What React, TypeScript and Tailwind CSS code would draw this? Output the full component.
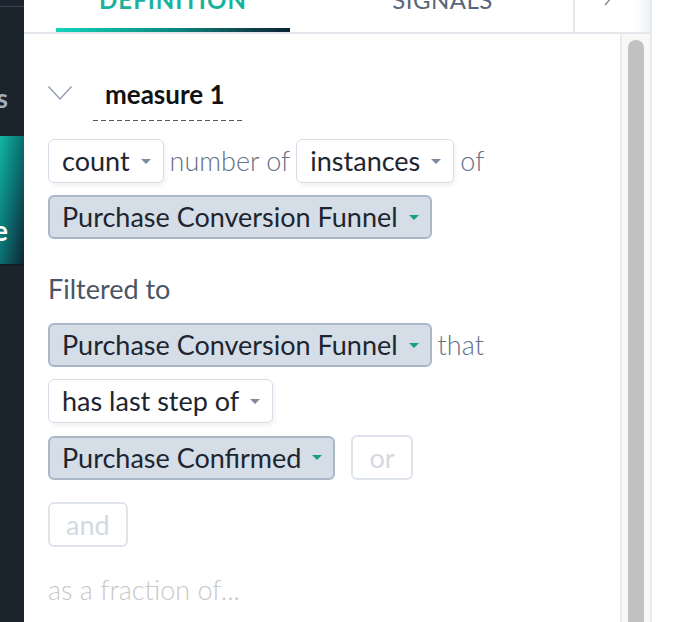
import React from 'react';

type Tone = 'plain' | 'entity';

function Caret({ tone }: { tone: Tone }) {
    return (
        <svg width="10" height="5" viewBox="0 0 10 5" className="ml-[11px] shrink-0">
            <path d="M0 0 L10 0 L5 5 Z" fill={tone === 'entity' ? '#179f86' : '#7d899c'} />
        </svg>
    );
}

function Picker({ label, tone = 'plain' }: { label: string; tone?: Tone }) {
    const look =
        tone === 'entity'
            ? 'border-2 border-[#a9b7c9] bg-[#d5dde7] pl-[12px] pr-[11px]'
            : 'border border-[#d7dde6] bg-white pl-[13px] pr-[12px] shadow-[2px_3px_4px_rgba(0,0,0,0.05)]';
    return (
        <div className={`flex h-[44px] shrink-0 items-center rounded-[6px] text-[#1d2530] ${look}`}>
            <span>{label}</span>
            <Caret tone={tone} />
        </div>
    );
}

function Ghost({ label, pad }: { label: string; pad: string }) {
    return (
        <div className={`flex h-[45px] shrink-0 items-center rounded-[6px] border-2 border-[#dfe4ec] text-[#d3d9e2] ${pad}`}>
            {label}
        </div>
    );
}

function Word({ children }: { children: React.ReactNode }) {
    return <span className="shrink-0 font-light text-[#657184]">{children}</span>;
}

function Sidebar() {
    return (
        <aside className="flex w-[24px] shrink-0 flex-col overflow-hidden bg-[#1b232d] font-bold">
            <div className="mt-[6px] h-px bg-[#3a434e]" />
            <div className="mt-[78px] flex h-[26px] justify-end overflow-hidden pr-[16px] text-[26px] leading-[26px] whitespace-nowrap text-[#a3adbb]">
                Metrics
            </div>
            <div className="mt-[25px] flex h-[128px] items-end justify-end overflow-hidden bg-gradient-to-br from-[#12b7a1] via-[#0b6f70] to-[#0a2636] pr-[16px] pb-[20px] text-[28px] leading-[28px] whitespace-nowrap text-white">
                Measure
            </div>
            <div className="h-[2px] bg-[#141a21]" />
        </aside>
    );
}

function Tabs() {
    return (
        <div className="flex h-[34px] shrink-0 border-b-2 border-[#e4e7eb]">
            <div className="ml-[32px] flex w-[234px] flex-col items-center">
                <div className="-mt-[12px] h-[40px] text-[24px] leading-[24px] font-bold tracking-[1px] text-[#19b39c]">
                    DEFINITION
                </div>
                <div className="mt-auto h-[4px] w-full bg-gradient-to-r from-[#14d4bb] via-[#0b8a80] to-[#0a2233]" />
            </div>
            <div className="flex w-[283px] justify-center pl-[22px]">
                <div className="-mt-[12px] text-[24px] leading-[24px] tracking-[0.5px] text-[#59657a]">SIGNALS</div>
            </div>
            <div className="w-[2px] bg-[#e4e7eb]" />
            <div className="flex flex-1 bg-gradient-to-r from-white from-80% to-[#eef0f3] pl-[28px]">
                <svg width="12" height="20" viewBox="0 0 12 20" className="-mt-[14px]">
                    <path d="M2 1 L10 10 L2 19" fill="none" stroke="#6f7b92" strokeWidth="1.2" />
                </svg>
            </div>
        </div>
    );
}

function Scrollbar() {
    return (
        <div className="flex w-[30px] shrink-0 border-l-2 border-[#e9eaec] bg-[#f8f8f8] pt-[6px] pl-[6px]">
            <div className="h-[600px] w-[16px] rounded-t-[8px] bg-[#c1c1c1]" />
        </div>
    );
}

export default function App() {
    return (
        <div className="flex h-[622px] w-[698px] overflow-hidden bg-white font-['Lato',sans-serif]">
            <Sidebar />
            <section className="flex w-[628px] shrink-0 flex-col border-r-2 border-[#e6e9ed]">
                <Tabs />
                <div className="flex flex-1 overflow-hidden">
                    <div className="flex flex-1 flex-col pl-[24px] text-[27px] leading-[34px]">
                        {/* measure name */}
                        <div className="mt-[37px] flex h-[50px] items-center">
                            <svg width="24" height="14" viewBox="0 0 24 14" className="-mt-[6px] shrink-0">
                                <path d="M0.5 0.5 L12 13 L23.5 0.5" fill="none" stroke="#8d99ab" strokeWidth="1.2" />
                            </svg>
                            <div className="ml-[21px] flex h-[50px] w-[150px] flex-col">
                                <div className="flex flex-1 items-center pb-[3px] pl-[12px] text-[26px] font-bold text-[#111]">
                                    measure 1
                                </div>
                                <div className="h-px bg-[repeating-linear-gradient(to_right,#4c5866_0_5px,transparent_5px_8px)]" />
                            </div>
                        </div>

                        {/* what is counted */}
                        <div className="mt-[18px] flex flex-col gap-[12px]">
                            <div className="flex items-center gap-[6px]">
                                <Picker label="count" />
                                <Word>number of</Word>
                                <Picker label="instances" />
                                <Word>of</Word>
                            </div>
                            <div className="flex">
                                <Picker label="Purchase Conversion Funnel" tone="entity" />
                            </div>
                        </div>

                        <div className="mt-[28px] flex h-[44px] items-center text-[#4a5565]">Filtered to</div>

                        <div className="mt-[12px] flex flex-col gap-[12px]">
                            <div className="flex items-center gap-[6px]">
                                <Picker label="Purchase Conversion Funnel" tone="entity" />
                                <Word>that</Word>
                            </div>
                            <div className="flex">
                                <Picker label="has last step of" />
                            </div>
                            <div className="flex items-center gap-[16px]">
                                <Picker label="Purchase Confirmed" tone="entity" />
                                <Ghost label="or" pad="px-[16px]" />
                            </div>
                        </div>

                        <div className="mt-[22px] flex">
                            <Ghost label="and" pad="px-[16px]" />
                        </div>

                        <div className="mt-[21px] flex h-[44px] items-center font-light text-[#c8c8c8]">as a fraction of...</div>
                    </div>
                    <Scrollbar />
                </div>
            </section>
            <div className="flex-1 bg-white" />
        </div>
    );
}
